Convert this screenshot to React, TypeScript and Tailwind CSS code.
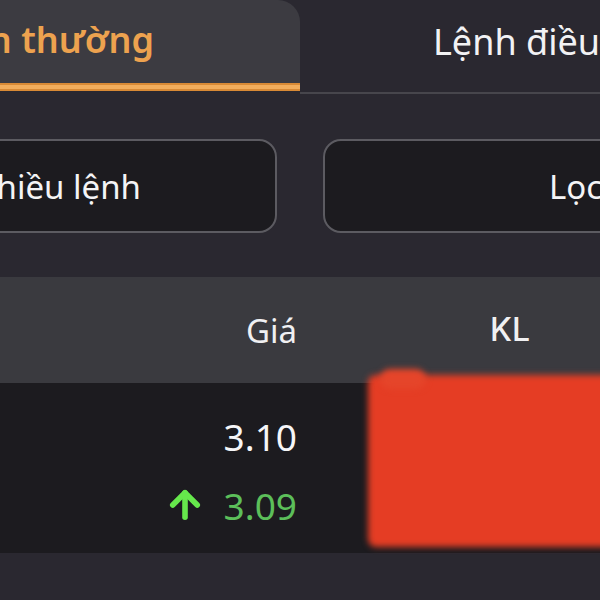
import React from 'react';
import { ArrowUp } from 'lucide-react';

export default function App() {
  return (
    <div className="w-[600px] h-[600px] overflow-hidden bg-[#2a2830] font-['Noto_Sans',sans-serif] text-white">
      {/* Tabs */}
      <div className="flex h-[94px]">
        <div className="w-[300px] shrink-0 flex flex-col">
          <div className="h-[83px] bg-[#3c3b41] rounded-tr-[22px] overflow-hidden flex items-center justify-end pr-[146px]">
            <span className="whitespace-nowrap text-[36px] font-semibold text-[#eda24f] leading-none pb-[4px]">Lệnh thường</span>
          </div>
          <div className="h-[8px] bg-[#f2ad5c] border-y-2 border-[#d98a35]"></div>
        </div>
        <div className="flex-1 flex flex-col">
          <div className="h-[92px] flex items-center pl-[133px] pb-[8px]">
            <span className="whitespace-nowrap text-[36px] leading-none text-[#f2f2f4]">Lệnh điều kiện</span>
          </div>
          <div className="h-[2px] bg-[#47464c]"></div>
        </div>
      </div>

      {/* Filters */}
      <div className="h-[183px] flex items-center ml-[-160px] gap-[46px] pt-[1px]">
        <div className="w-[437px] h-[94px] shrink-0 rounded-[18px] border-2 border-[#5c5b61] bg-[#1c1b1f] flex items-center justify-end pr-[134px] overflow-hidden">
          <span className="whitespace-nowrap text-[33px] text-[#f4f4f6] leading-none">Nhiều lệnh</span>
        </div>
        <div className="w-[437px] h-[94px] shrink-0 rounded-[18px] border-2 border-[#5c5b61] bg-[#1c1b1f] flex items-center pl-[224px] overflow-hidden">
          <span className="whitespace-nowrap text-[33px] text-[#f4f4f6] leading-none">Lọc lệnh</span>
        </div>
      </div>

      {/* Table header */}
      <div className="h-[106px] bg-[#3a3a3f] flex items-center">
        <div className="w-[297px] shrink-0 text-right text-[33px] text-[#f0f0f2] leading-none">Giá</div>
        <div className="w-[426px] shrink-0 text-center text-[32px] font-medium text-[#f0f0f2] leading-none font-['Inter',sans-serif]">KL</div>
      </div>

      {/* Row */}
      <div className="relative h-[170px] bg-[#1c1b1f] flex">
        <div className="w-[297px] shrink-0 flex flex-col items-end pt-[35px] gap-[29px]">
          <div className="text-[37px] leading-none text-[#f6f6f8]">3.10</div>
          <div className="flex items-center gap-[18px]">
            <ArrowUp className="w-[42px] h-[42px] text-[#66e84c]" strokeWidth={3.2} />
            <span className="text-[37px] leading-none text-[#5cbf5a]">3.09</span>
          </div>
        </div>
        <div className="absolute left-[368px] top-[-8px] w-[250px] h-[172px] bg-[#e53d24] rounded-[8px] blur-[3px]"></div>
        <div className="absolute left-[380px] top-[-14px] w-[46px] h-[20px] bg-[#e5452a] rounded-full blur-[3px]"></div>
      </div>
    </div>
  );
}
